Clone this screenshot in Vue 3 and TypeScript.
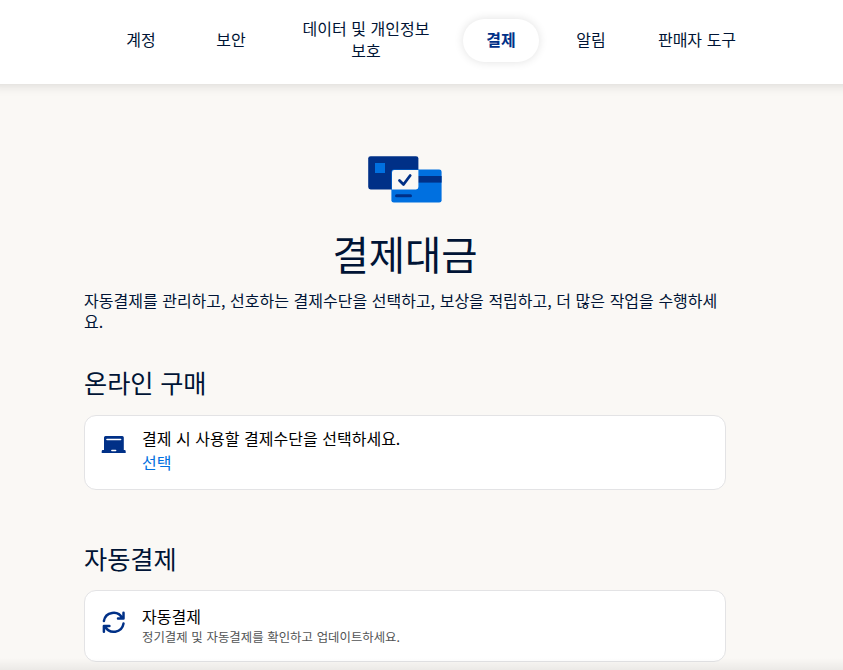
<script setup lang="ts">
interface NavItem {
  label: string
  size: string
  active?: boolean
}

const navItems: NavItem[] = [
  { label: '계정', size: 'short' },
  { label: '보안', size: 'short' },
  { label: '데이터 및 개인정보 보호', size: 'long' },
  { label: '결제', size: 'short', active: true },
  { label: '알림', size: 'short' },
  { label: '판매자 도구', size: 'medium' },
]
</script>

<template>
  <div class="page">
    <header class="header">
      <nav class="nav">
        <a
          v-for="item in navItems"
          :key="item.label"
          class="nav-item"
          :class="[item.size, { active: item.active }]"
        >{{ item.label }}</a>
      </nav>
    </header>

    <main class="content">
      <svg class="hero" width="76" height="50" viewBox="0 0 76 50" aria-hidden="true">
        <rect x="1.2" y="1.2" width="50.2" height="33.2" rx="2.4" fill="#003087" />
        <rect x="8" y="8" width="10" height="10" fill="#0070e0" />
        <rect x="24.4" y="14.4" width="50.2" height="33.2" rx="2.4" fill="#0070e0" />
        <rect x="51" y="21" width="23.6" height="6.6" fill="#003087" />
        <path d="M27.4 15h24v17a2.4 2.4 0 0 1-2.400 2.400H25V17.400a2.400 2.400 0 0 1 2.400-2.400z" fill="#faf8f5" />
        <path d="M32.500 25.500l4 4 6.700-9" fill="none" stroke="#003087" stroke-width="2.800" stroke-linecap="round" stroke-linejoin="round" />
        <path d="M29.500 40.700h14" stroke="#003087" stroke-width="3" stroke-linecap="round" />
      </svg>
      <h1 class="title">결제대금</h1>
      <p class="intro">자동결제를 관리하고, 선호하는 결제수단을 선택하고, 보상을 적립하고, 더 많은 작업을 수행하세요.</p>

      <section class="section online">
        <h2 class="heading">온라인 구매</h2>
        <div class="card">
          <svg class="icon" width="26" height="26" viewBox="0 0 26 26" aria-hidden="true">
            <path d="M5.500 5h16.800a1.500 1.500 0 0 1 1.500 1.500V19h.7a1.200 1.200 0 0 1 1.200 1.200v1.800H1.700v-1.800A1.200 1.200 0 0 1 2.900 19H4V6.500A1.500 1.500 0 0 1 5.500 5z" fill="#003087" />
            <path d="M7 8.500h13.600M11.900 19.500h3.700" stroke="#fff" stroke-width="1.600" stroke-linecap="round" />
          </svg>
          <div class="card-text">
            <div class="card-title">결제 시 사용할 결제수단을 선택하세요.</div>
            <a class="link">선택</a>
          </div>
        </div>
      </section>

      <section class="section automatic">
        <h2 class="heading">자동결제</h2>
        <div class="card">
          <svg class="icon" width="26" height="26" viewBox="0 0 26 26" fill="none" stroke="#003087" stroke-width="2.500" stroke-linecap="round" stroke-linejoin="round" aria-hidden="true">
            <path d="M3.900 12A9.800 9.800 0 0 1 22.300 9.200M23.500 3.800v5.700h-5.500" />
            <path d="M23.500 14.600A9.800 9.800 0 0 1 5.100 17.400M3.900 22.800v-5.700h5.500" />
          </svg>
          <div class="card-text">
            <div class="card-title">자동결제</div>
            <div class="card-note">정기결제 및 자동결제를 확인하고 업데이트하세요.</div>
          </div>
        </div>
      </section>
    </main>
    <div class="bottom-shade"></div>
  </div>
</template>

<style>
body {
  background: #faf8f5;
}
</style>

<style scoped>
.page {
  position: relative;
  box-sizing: border-box;
  height: 670px;
  overflow: hidden;
  background: #faf8f5;
  color: #001435;
  font-family: "Noto Sans CJK KR", sans-serif;
  font-size: 16px;
  line-height: 22px;
  word-spacing: 1px;
}
.header {
  display: flex;
  align-items: center;
  box-sizing: border-box;
  height: 84px;
  padding-left: 103px;
  padding-bottom: 3px;
  background: #fff;
  box-shadow: 0 -12px 12px 12px rgba(0, 0, 0, 0.16);
}
.nav {
  display: flex;
  align-items: center;
  gap: 14px;
}
.nav-item {
  display: flex;
  align-items: center;
  justify-content: center;
  box-sizing: border-box;
  height: 43px;
  padding-bottom: 4px;
  border-radius: 22px;
  text-align: center;
}
.short {
  width: 76px;
}
.long {
  width: 166px;
  padding-right: 18px;
  padding-left: 18px;
}
.medium {
  width: 108px;
}
.active {
  color: #003087;
  font-weight: 700;
  box-shadow: 0 0 10px rgba(0, 0, 0, 0.12);
}
.content {
  display: flex;
  flex-direction: column;
  width: 642px;
  margin-left: 84px;
  padding-top: 71px;
}
.hero {
  align-self: center;
}
.title {
  margin: 23px 0 0;
  font-size: 39.4px;
  font-weight: 400;
  line-height: 50px;
  text-align: center;
}
.intro {
  margin: 12px 0 0;
  line-height: 21px;
}
.heading {
  margin: 0;
  font-size: 25.2px;
  font-weight: 400;
  line-height: 32px;
}
.online {
  margin-top: 34px;
}
.automatic {
  margin-top: 52px;
}
.card {
  display: flex;
  gap: 16px;
  box-sizing: border-box;
  height: 75px;
  margin-top: 17px;
  padding: 10px 15px;
  border: 1px solid #e3e3e5;
  border-radius: 12px;
  background: #fff;
  color: #000;
}
.automatic .card {
  height: 72px;
  margin-top: 16px;
  padding-top: 13px;
}
.icon {
  flex: none;
  margin-top: 5px;
}
.card-title,
.link {
  display: block;
  line-height: 24px;
}
.link {
  color: #0070e0;
}
.card-note {
  color: #515354;
  font-size: 12.4px;
  line-height: 18px;
}
.bottom-shade {
  position: absolute;
  right: 0;
  bottom: 0;
  left: 0;
  height: 12px;
  background: linear-gradient(rgba(0, 0, 0, 0), rgba(0, 0, 0, 0.06));
}
</style>
